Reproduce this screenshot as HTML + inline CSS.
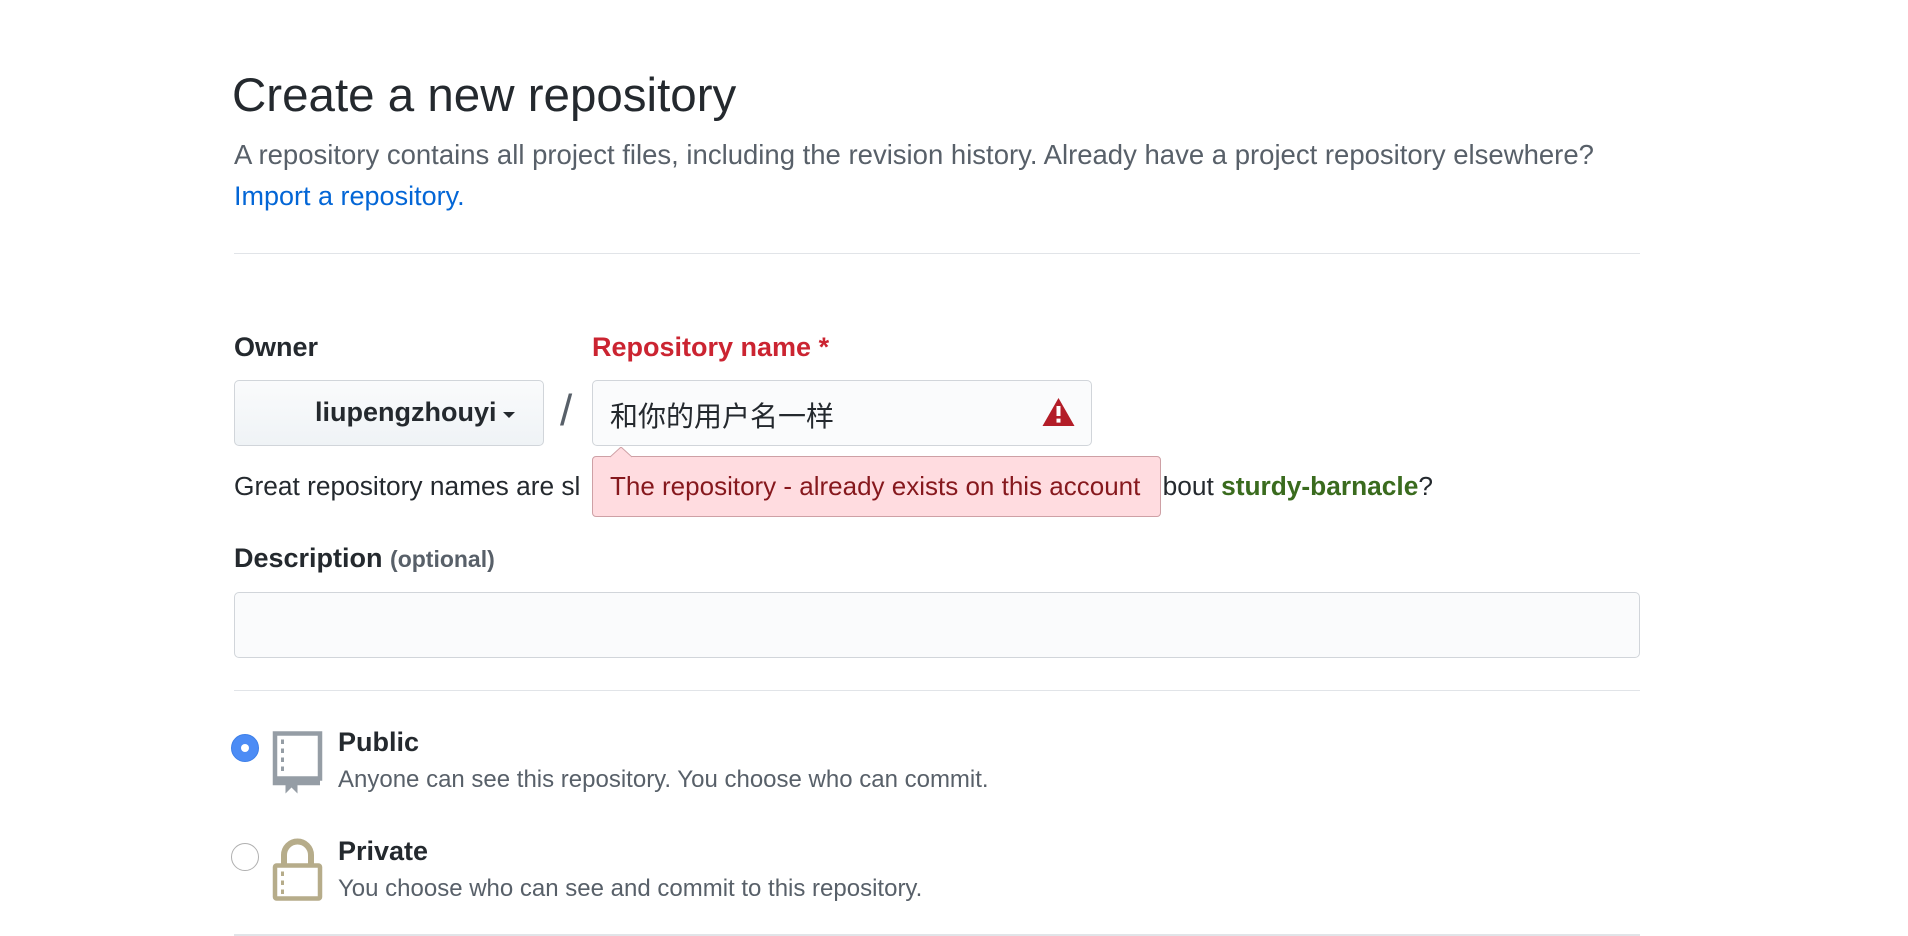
<!DOCTYPE html>
<html><head><meta charset="utf-8"><style>
*{margin:0;padding:0;box-sizing:border-box}
body{width:1908px;height:936px;background:#fff;font-family:"Liberation Sans","Noto Sans CJK SC",sans-serif;color:#24292e;position:relative;overflow:hidden}
.a{position:absolute;white-space:nowrap}
.hr{position:absolute;left:234px;width:1406px;height:1px;background:#e1e4e8}
</style></head><body>
<div class="a" style="left:232px;top:68px;font-size:47.5px;">Create a new repository</div>
<div class="a" style="left:234px;top:139px;font-size:27.5px;color:#586069">A repository contains all project files, including the revision history. Already have a project repository elsewhere?</div>
<div class="a" style="left:234px;top:181px;font-size:27px;color:#0366d6">Import a repository.</div>
<div class="hr" style="top:253px"></div>

<div class="a" style="left:234px;top:332px;font-size:27px;font-weight:bold">Owner</div>
<div class="a" style="left:592px;top:332px;font-size:27px;font-weight:bold;color:#cb2431">Repository name <span>*</span></div>

<div class="a" style="left:234px;top:380px;width:310px;height:66px;border:1px solid #d1d5da;border-radius:5px;background:linear-gradient(#fafbfc,#eff3f6)"></div>
<div class="a" style="left:315px;top:397px;font-size:27px;font-weight:bold">liupengzhouyi</div>
<div class="a" style="left:503px;top:412px;width:0;height:0;border-left:6px solid transparent;border-right:6px solid transparent;border-top:6px solid #24292e"></div>
<div class="a" style="left:560px;top:386px;font-size:44px;color:#586069">/</div>

<div class="a" style="left:592px;top:380px;width:500px;height:66px;border:1px solid #d1d5da;border-radius:5px;background:#fafbfc"></div>
<div class="a" style="left:610px;top:395px;font-size:28px;">和你的用户名一样</div>
<svg class="a" style="left:1042px;top:398px" width="33" height="28" viewBox="0 0 16 14"><path d="M8 0L16 14H0Z" fill="#b31d28"/><rect x="7" y="4" width="2" height="5" fill="#fff"/><rect x="7" y="10.3" width="2" height="2" fill="#fff"/></svg>

<div class="a" style="left:234px;top:471px;font-size:26.3px;">Great repository names are sl</div>
<div class="a" style="right:475px;top:471px;font-size:26.3px;">bout <b style="color:#3a6b1e">sturdy-barnacle</b>?</div>

<div class="a" style="left:592px;top:456px;width:569px;height:61px;border:1px solid #cea0a5;border-radius:4px;background:#ffdce0"></div>
<svg class="a" style="left:610px;top:447px" width="22" height="11"><path d="M0 10L11 0L22 10" fill="#ffdce0" stroke="#cea0a5"/></svg>
<div class="a" style="left:610px;top:471px;font-size:26px;color:#86181d">The repository - already exists on this account</div>

<div class="a" style="left:234px;top:543px;font-size:27px;font-weight:bold">Description <span style="font-size:23px;color:#586069">(optional)</span></div>
<div class="a" style="left:234px;top:592px;width:1406px;height:66px;border:1px solid #d1d5da;border-radius:5px;background:#fafbfc"></div>
<div class="hr" style="top:690px"></div>

<div class="a" style="left:231px;top:734px;width:28px;height:28px;border-radius:50%;background:#4c8cf5;border:1px solid #3d7fe8"></div>
<div class="a" style="left:241px;top:744px;width:8px;height:8px;border-radius:50%;background:#fff"></div>
<svg class="a" style="left:272px;top:730px" width="51" height="64" viewBox="0 0 34 42"><path d="M2 2H32V32H2Z M2 32V35H32" fill="none" stroke="#959da5" stroke-width="3"/><rect x="6" y="6" width="2" height="3" fill="#959da5"/><rect x="6" y="12" width="2" height="3" fill="#959da5"/><rect x="6" y="18" width="2" height="3" fill="#959da5"/><rect x="6" y="24" width="2" height="3" fill="#959da5"/><path d="M9 33H17V42L13 38L9 42Z" fill="#959da5"/></svg>
<div class="a" style="left:338px;top:727px;font-size:27px;font-weight:bold">Public</div>
<div class="a" style="left:338px;top:766px;font-size:24px;color:#586069">Anyone can see this repository. You choose who can commit.</div>

<div class="a" style="left:231px;top:843px;width:28px;height:28px;border-radius:50%;background:#fff;border:1px solid #b0b0b0"></div>
<svg class="a" style="left:272px;top:838px" width="51" height="64" viewBox="0 0 34 42"><path d="M8 17V11A9 9 0 0 1 26 11V17" fill="none" stroke="#b6ac8a" stroke-width="4"/><rect x="2" y="18" width="30" height="22" rx="1" fill="none" stroke="#b6ac8a" stroke-width="3"/><rect x="6" y="22" width="2" height="3" fill="#b6ac8a"/><rect x="6" y="28" width="2" height="3" fill="#b6ac8a"/><rect x="6" y="34" width="2" height="3" fill="#b6ac8a"/></svg>
<div class="a" style="left:338px;top:836px;font-size:27px;font-weight:bold">Private</div>
<div class="a" style="left:338px;top:875px;font-size:24px;color:#586069">You choose who can see and commit to this repository.</div>
<div class="hr" style="top:934px;height:2px"></div>
</body></html>
